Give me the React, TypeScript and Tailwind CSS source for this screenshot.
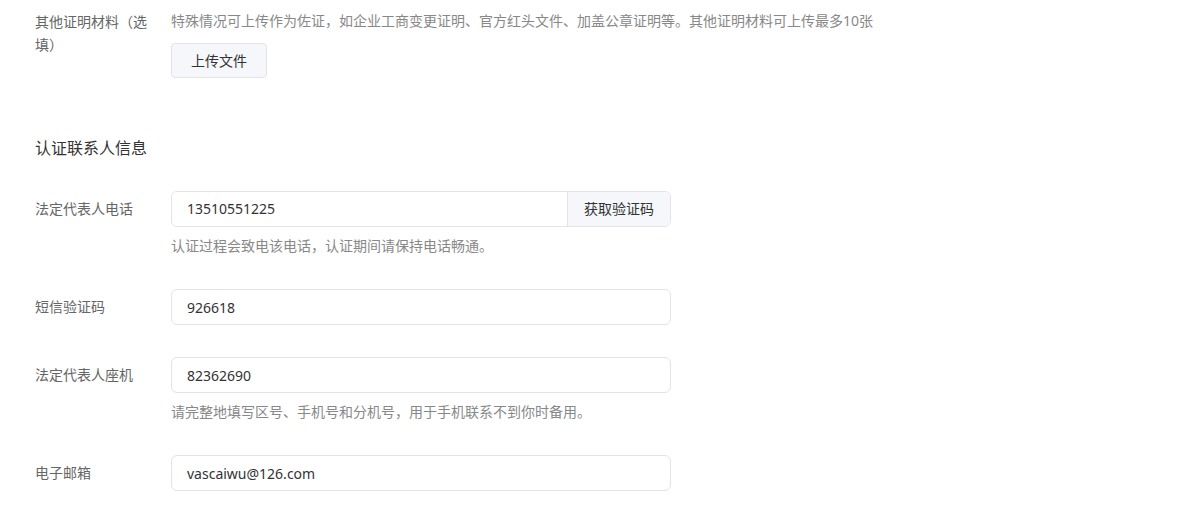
import React from "react";

const font = { fontFamily: '"Noto Sans", "Noto Sans CJK SC", sans-serif' };

function Row({ label, children }: { label: string; children: React.ReactNode }) {
  return (
    <div className="flex items-start gap-4">
      <div className="w-[120px] shrink-0 text-sm leading-9 text-[#666]">{label}</div>
      <div className="flex-1">{children}</div>
    </div>
  );
}

function Field({ value }: { value: string }) {
  return (
    <input
      readOnly
      value={value}
      className="h-9 w-[500px] rounded-md border border-[#e2e4e8] bg-white px-[15px] text-sm text-[#333] outline-none"
      style={font}
    />
  );
}

function Hint({ children }: { children: React.ReactNode }) {
  return <p className="mt-2 text-sm leading-[22px] text-[#888]">{children}</p>;
}

export default function App() {
  return (
    <div className="min-h-[510px] bg-white px-[35px] pt-[10px]" style={font}>
      <div className="flex items-start gap-4">
        <div className="w-[120px] shrink-0 text-sm leading-[23px] text-[#666]">其他证明材料（选填）</div>
        <div className="flex-1">
          <p className="text-sm leading-[22px] text-[#888]">
            特殊情况可上传作为佐证，如企业工商变更证明、官方红头文件、加盖公章证明等。其他证明材料可上传最多10张
          </p>
          <button className="mt-[11px] h-[35px] w-24 rounded border border-[#e2e4e8] bg-[#f5f7fa] text-sm text-[#333]">
            上传文件
          </button>
        </div>
      </div>

      <h2 className="mt-[58px] text-base leading-6 text-[#333]">认证联系人信息</h2>

      <div className="mt-[31px] flex flex-col gap-8">
        <Row label="法定代表人电话">
          <div className="flex h-9 w-[500px] overflow-hidden rounded-md border border-[#e2e4e8]">
            <input
              readOnly
              value="13510551225"
              className="min-w-0 flex-1 bg-white px-[15px] text-sm text-[#333] outline-none"
              style={font}
            />
            <button className="w-[103px] border-l border-[#e2e4e8] bg-[#f5f7fa] text-sm text-[#333]">获取验证码</button>
          </div>
          <Hint>认证过程会致电该电话，认证期间请保持电话畅通。</Hint>
        </Row>

        <Row label="短信验证码">
          <Field value="926618" />
        </Row>

        <Row label="法定代表人座机">
          <Field value="82362690" />
          <Hint>请完整地填写区号、手机号和分机号，用于手机联系不到你时备用。</Hint>
        </Row>

        <Row label="电子邮箱">
          <Field value="vascaiwu@126.com" />
        </Row>
      </div>
    </div>
  );
}
